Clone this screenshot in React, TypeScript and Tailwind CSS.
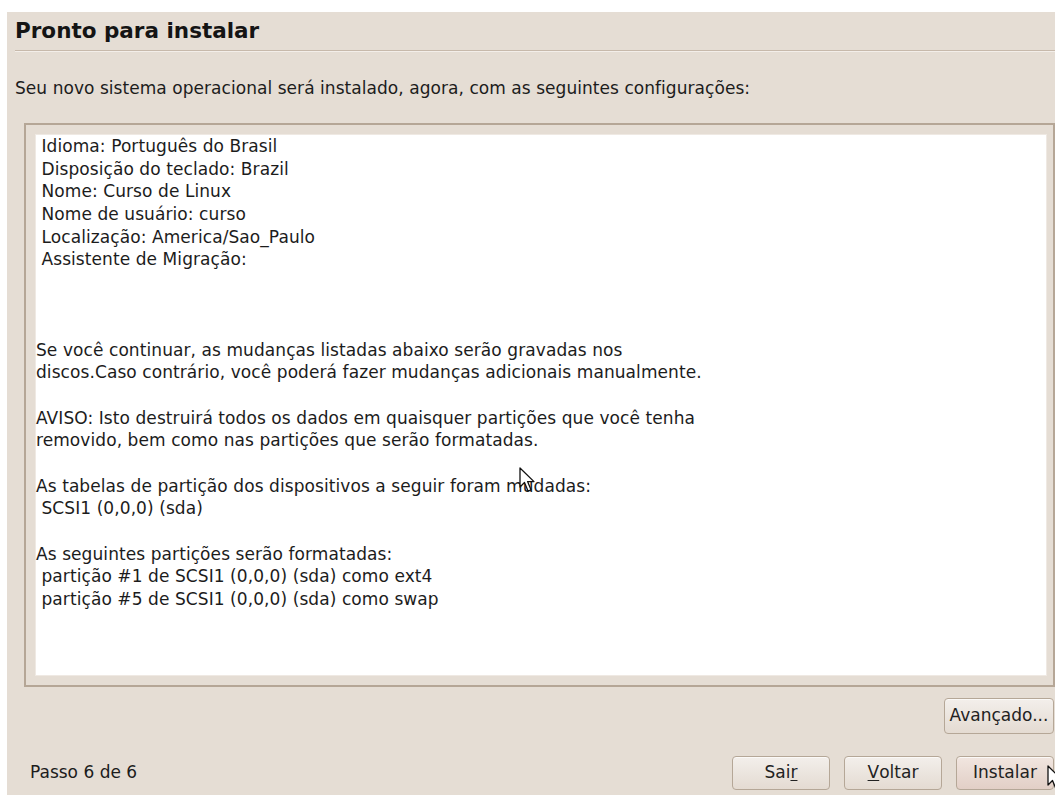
import React from "react";

const font = { fontFamily: '"DejaVu Sans", "Liberation Sans", sans-serif' };

const summary = [
  " Idioma: Português do Brasil",
  " Disposição do teclado: Brazil",
  " Nome: Curso de Linux",
  " Nome de usuário: curso",
  " Localização: America/Sao_Paulo",
  " Assistente de Migração:",
  "",
  "",
  "",
  "Se você continuar, as mudanças listadas abaixo serão gravadas nos",
  "discos.Caso contrário, você poderá fazer mudanças adicionais manualmente.",
  "",
  "AVISO: Isto destruirá todos os dados em quaisquer partições que você tenha",
  "removido, bem como nas partições que serão formatadas.",
  "",
  "As tabelas de partição dos dispositivos a seguir foram mudadas:",
  " SCSI1 (0,0,0) (sda)",
  "",
  "As seguintes partições serão formatadas:",
  " partição #1 de SCSI1 (0,0,0) (sda) como ext4",
  " partição #5 de SCSI1 (0,0,0) (sda) como swap",
];

function Cursor({ className }: { className: string }) {
  return (
    <svg className={className} width="17" height="26" viewBox="0 0 17 26">
      <path d="M1 1 L1 20 L5.5 15.5 L9 24 L12 22.8 L8.6 14.6 L15 14.6 Z" fill="#fff" stroke="#111" strokeWidth="1.3" strokeLinejoin="round" />
    </svg>
  );
}

function GtkButton({ children, className = "", tinted = false }: { children: React.ReactNode; className?: string; tinted?: boolean }) {
  return (
    <button
      type="button"
      className={`flex items-center justify-center rounded-[4px] border border-[#b5a797] text-[17px] text-[#222] shadow-[inset_0_1px_0_#fbf9f7] ${
        tinted ? "bg-gradient-to-b from-[#f1e6e0] to-[#e2cfc6]" : "bg-gradient-to-b from-[#f3efeb] to-[#e4dbd2]"
      } ${className}`}
    >
      {children}
    </button>
  );
}

export default function App() {
  return (
    <div className="flex h-[795px] w-[1055px] flex-col overflow-hidden bg-white pl-[7px] pt-[12px]" style={font}>
      <div className="relative flex flex-1 flex-col bg-[#e5ddd4] text-[#1c1c1c]">
        <h1 className="pl-[8px] pt-[6px] text-[21.5px] font-bold leading-[26px] text-[#141414]">Pronto para instalar</h1>
        <div className="ml-[8px] mt-[6px] h-[2px] border-t border-b border-t-[#c7b9ab] border-b-[#f3eee9]" />
        <p className="mt-[25px] pl-[8px] text-[17px] leading-[22px] tracking-[0.05px]">
          Seu novo sistema operacional será instalado, agora, com as seguintes configurações:
        </p>

        <div className="ml-[17px] mt-[24px] h-[564px] border-2 border-[#b5a696] p-[9px] pr-[6px]">
          <div className="h-full border border-[#efe9e3] bg-white pt-0">
            {summary.map((line, i) => (
              <div key={i} className="h-[22.65px] whitespace-pre text-[17px] leading-[22.65px] tracking-[0.08px]">
                {line}
              </div>
            ))}
          </div>
        </div>

        <div className="mt-[11px] flex justify-end pr-[1px]">
          <GtkButton className="h-[36px] w-[110px]">Avançado...</GtkButton>
        </div>

        <div className="mt-[22px] flex items-center pr-[1px]">
          <span className="ml-[23px] text-[17px]">Passo 6 de 6</span>
          <div className="ml-auto flex gap-[14px]">
            <GtkButton className="h-[34px] w-[98px]">
              Sai<span className="underline underline-offset-2">r</span>
            </GtkButton>
            <GtkButton className="h-[34px] w-[98px]">
              <span className="underline underline-offset-2">V</span>oltar
            </GtkButton>
            <GtkButton className="h-[34px] w-[98px]" tinted>
              Instalar
            </GtkButton>
          </div>
        </div>

        <Cursor className="absolute left-[512px] top-[455px]" />
        <Cursor className="absolute left-[1040px] top-[753px]" />
      </div>
    </div>
  );
}
